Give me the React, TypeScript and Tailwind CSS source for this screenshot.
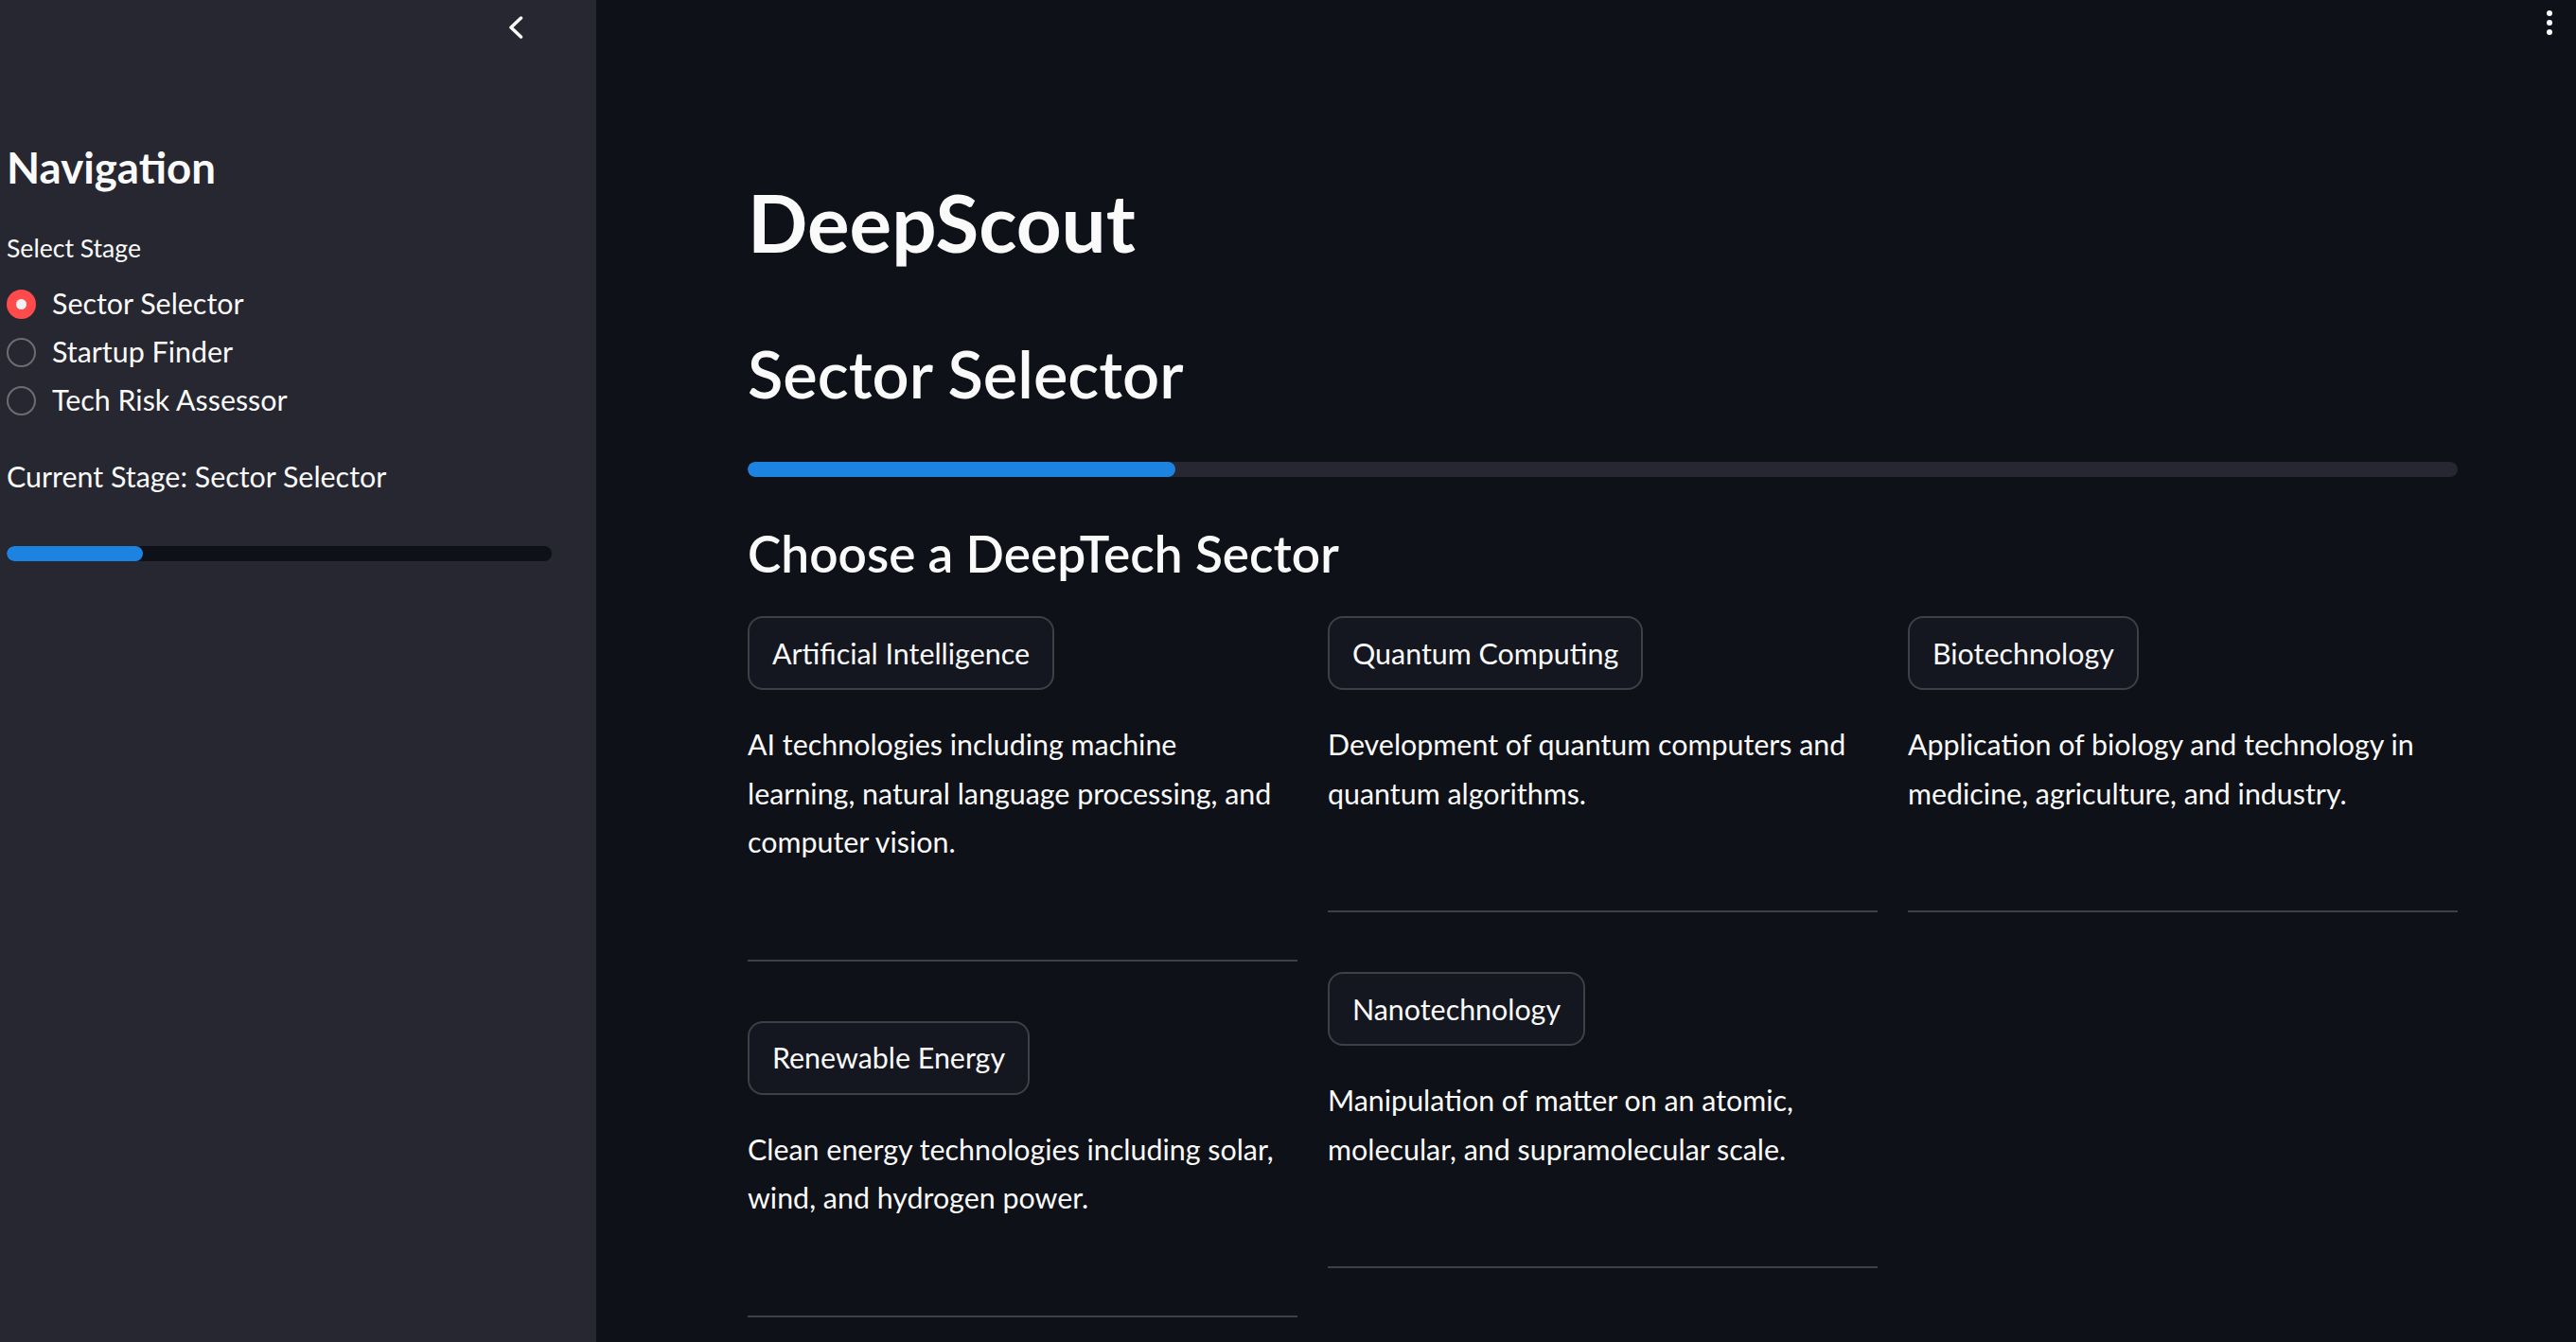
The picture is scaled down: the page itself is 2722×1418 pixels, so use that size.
const stages = ['Sector Selector', 'Startup Finder', 'Tech Risk Assessor']

type Sector = { name: string; lines: string[] }

const columns: Sector[][] = [
  [
    {
      name: 'Artificial Intelligence',
      lines: ['AI technologies including machine', 'learning, natural language processing, and', 'computer vision.'],
    },
    {
      name: 'Renewable Energy',
      lines: ['Clean energy technologies including solar,', 'wind, and hydrogen power.'],
    },
  ],
  [
    {
      name: 'Quantum Computing',
      lines: ['Development of quantum computers and', 'quantum algorithms.'],
    },
    {
      name: 'Nanotechnology',
      lines: ['Manipulation of matter on an atomic,', 'molecular, and supramolecular scale.'],
    },
  ],
  [
    {
      name: 'Biotechnology',
      lines: ['Application of biology and technology in', 'medicine, agriculture, and industry.'],
    },
  ],
]

function Progress({ value, track }: { value: number; track: string }) {
  return (
    <div className={`h-[16px] w-full overflow-hidden rounded-full ${track}`}>
      <div className="h-full rounded-full bg-[#1c83e1]" style={{ width: `${value}%` }} />
    </div>
  )
}

function Sidebar() {
  return (
    <aside className="flex w-[630px] shrink-0 flex-col bg-[#262730] pl-[7px] text-[#fafafa]">
      {/* collapse */}
      <div className="flex justify-end pr-[77px] pt-[17px]">
        <svg width="16" height="24" viewBox="0 0 16 24" fill="none">
          <path d="M13.5 2 3 12l10.5 10" stroke="#fafafa" strokeWidth="3.5" strokeLinecap="round" strokeLinejoin="round" />
        </svg>
      </div>

      <h2 className="mt-[109px] text-[45.6px] font-bold leading-[1.2]">Navigation</h2>

      <div className="mt-[38px] text-[26.6px] leading-[1.5]">Select Stage</div>

      <div className="mt-[13px] flex flex-col">
        {stages.map((s, i) => (
          <div key={s} className="flex h-[51px] items-center gap-[17px]">
            {i === 0 ? (
              <span className="flex h-[31px] w-[31px] items-center justify-center rounded-full bg-[#ff4b4b]">
                <span className="h-[11px] w-[11px] rounded-full bg-[#f0f2f6]" />
              </span>
            ) : (
              <span className="h-[31px] w-[31px] rounded-full border-2 border-[#6c6d73]" />
            )}
            <span className="text-[30.4px]">{s}</span>
          </div>
        ))}
      </div>

      <div className="mt-[30px] text-[30.4px] leading-[1.6]">Current Stage: Sector Selector</div>

      <div className="mt-[50px] w-[576px]">
        <Progress value={25} track="bg-[#0e1117]" />
      </div>
    </aside>
  )
}

function SectorItem({ sector }: { sector: Sector }) {
  return (
    <div className="flex flex-col items-start">
      <button className="flex h-[78px] items-center rounded-[16px] border-2 border-[#3d4047] bg-[#141720] px-[24px] text-[30.4px] text-[#fafafa]">
        {sector.name}
      </button>
      <p className="mt-[32px] text-[30.4px] leading-[51.5px] whitespace-nowrap">
        {sector.lines.map((l, i) => (
          <span key={i}>
            {l}
            {i < sector.lines.length - 1 && <br />}
          </span>
        ))}
      </p>
      <hr className="mt-[98px] w-full border-0 border-t-2 border-[#3d4044]" />
      <div className="h-[63px]" />
    </div>
  )
}

export default function App() {
  return (
    <div className="flex h-screen overflow-hidden bg-[#0e1117] font-[Lato,sans-serif] text-[#fafafa]">
      <Sidebar />

      <main className="relative flex-1 pl-[160px] pr-[125px]">
        {/* menu */}
        <div className="absolute right-[25px] top-[11px] flex flex-col gap-[4px]">
          <span className="h-[6px] w-[6px] rounded-full bg-[#fafafa]" />
          <span className="h-[6px] w-[6px] rounded-full bg-[#fafafa]" />
          <span className="h-[6px] w-[6px] rounded-full bg-[#fafafa]" />
        </div>

        <h1 className="mt-[185px] text-[83.5px] font-bold leading-[1.2]">DeepScout</h1>
        <h2 className="mt-[69px] text-[68.6px] font-semibold leading-[1.2]">Sector Selector</h2>

        <div className="mt-[51px]">
          <Progress value={25} track="bg-[#262730]" />
        </div>

        <h3 className="mt-[49px] text-[53.2px] font-semibold leading-[1.2]">Choose a DeepTech Sector</h3>

        <div className="mt-[35px] grid grid-cols-3 gap-x-[32px]">
          {columns.map((col, i) => (
            <div key={i} className="flex flex-col">
              {col.map((s) => (
                <SectorItem key={s.name} sector={s} />
              ))}
            </div>
          ))}
        </div>
      </main>
    </div>
  )
}
